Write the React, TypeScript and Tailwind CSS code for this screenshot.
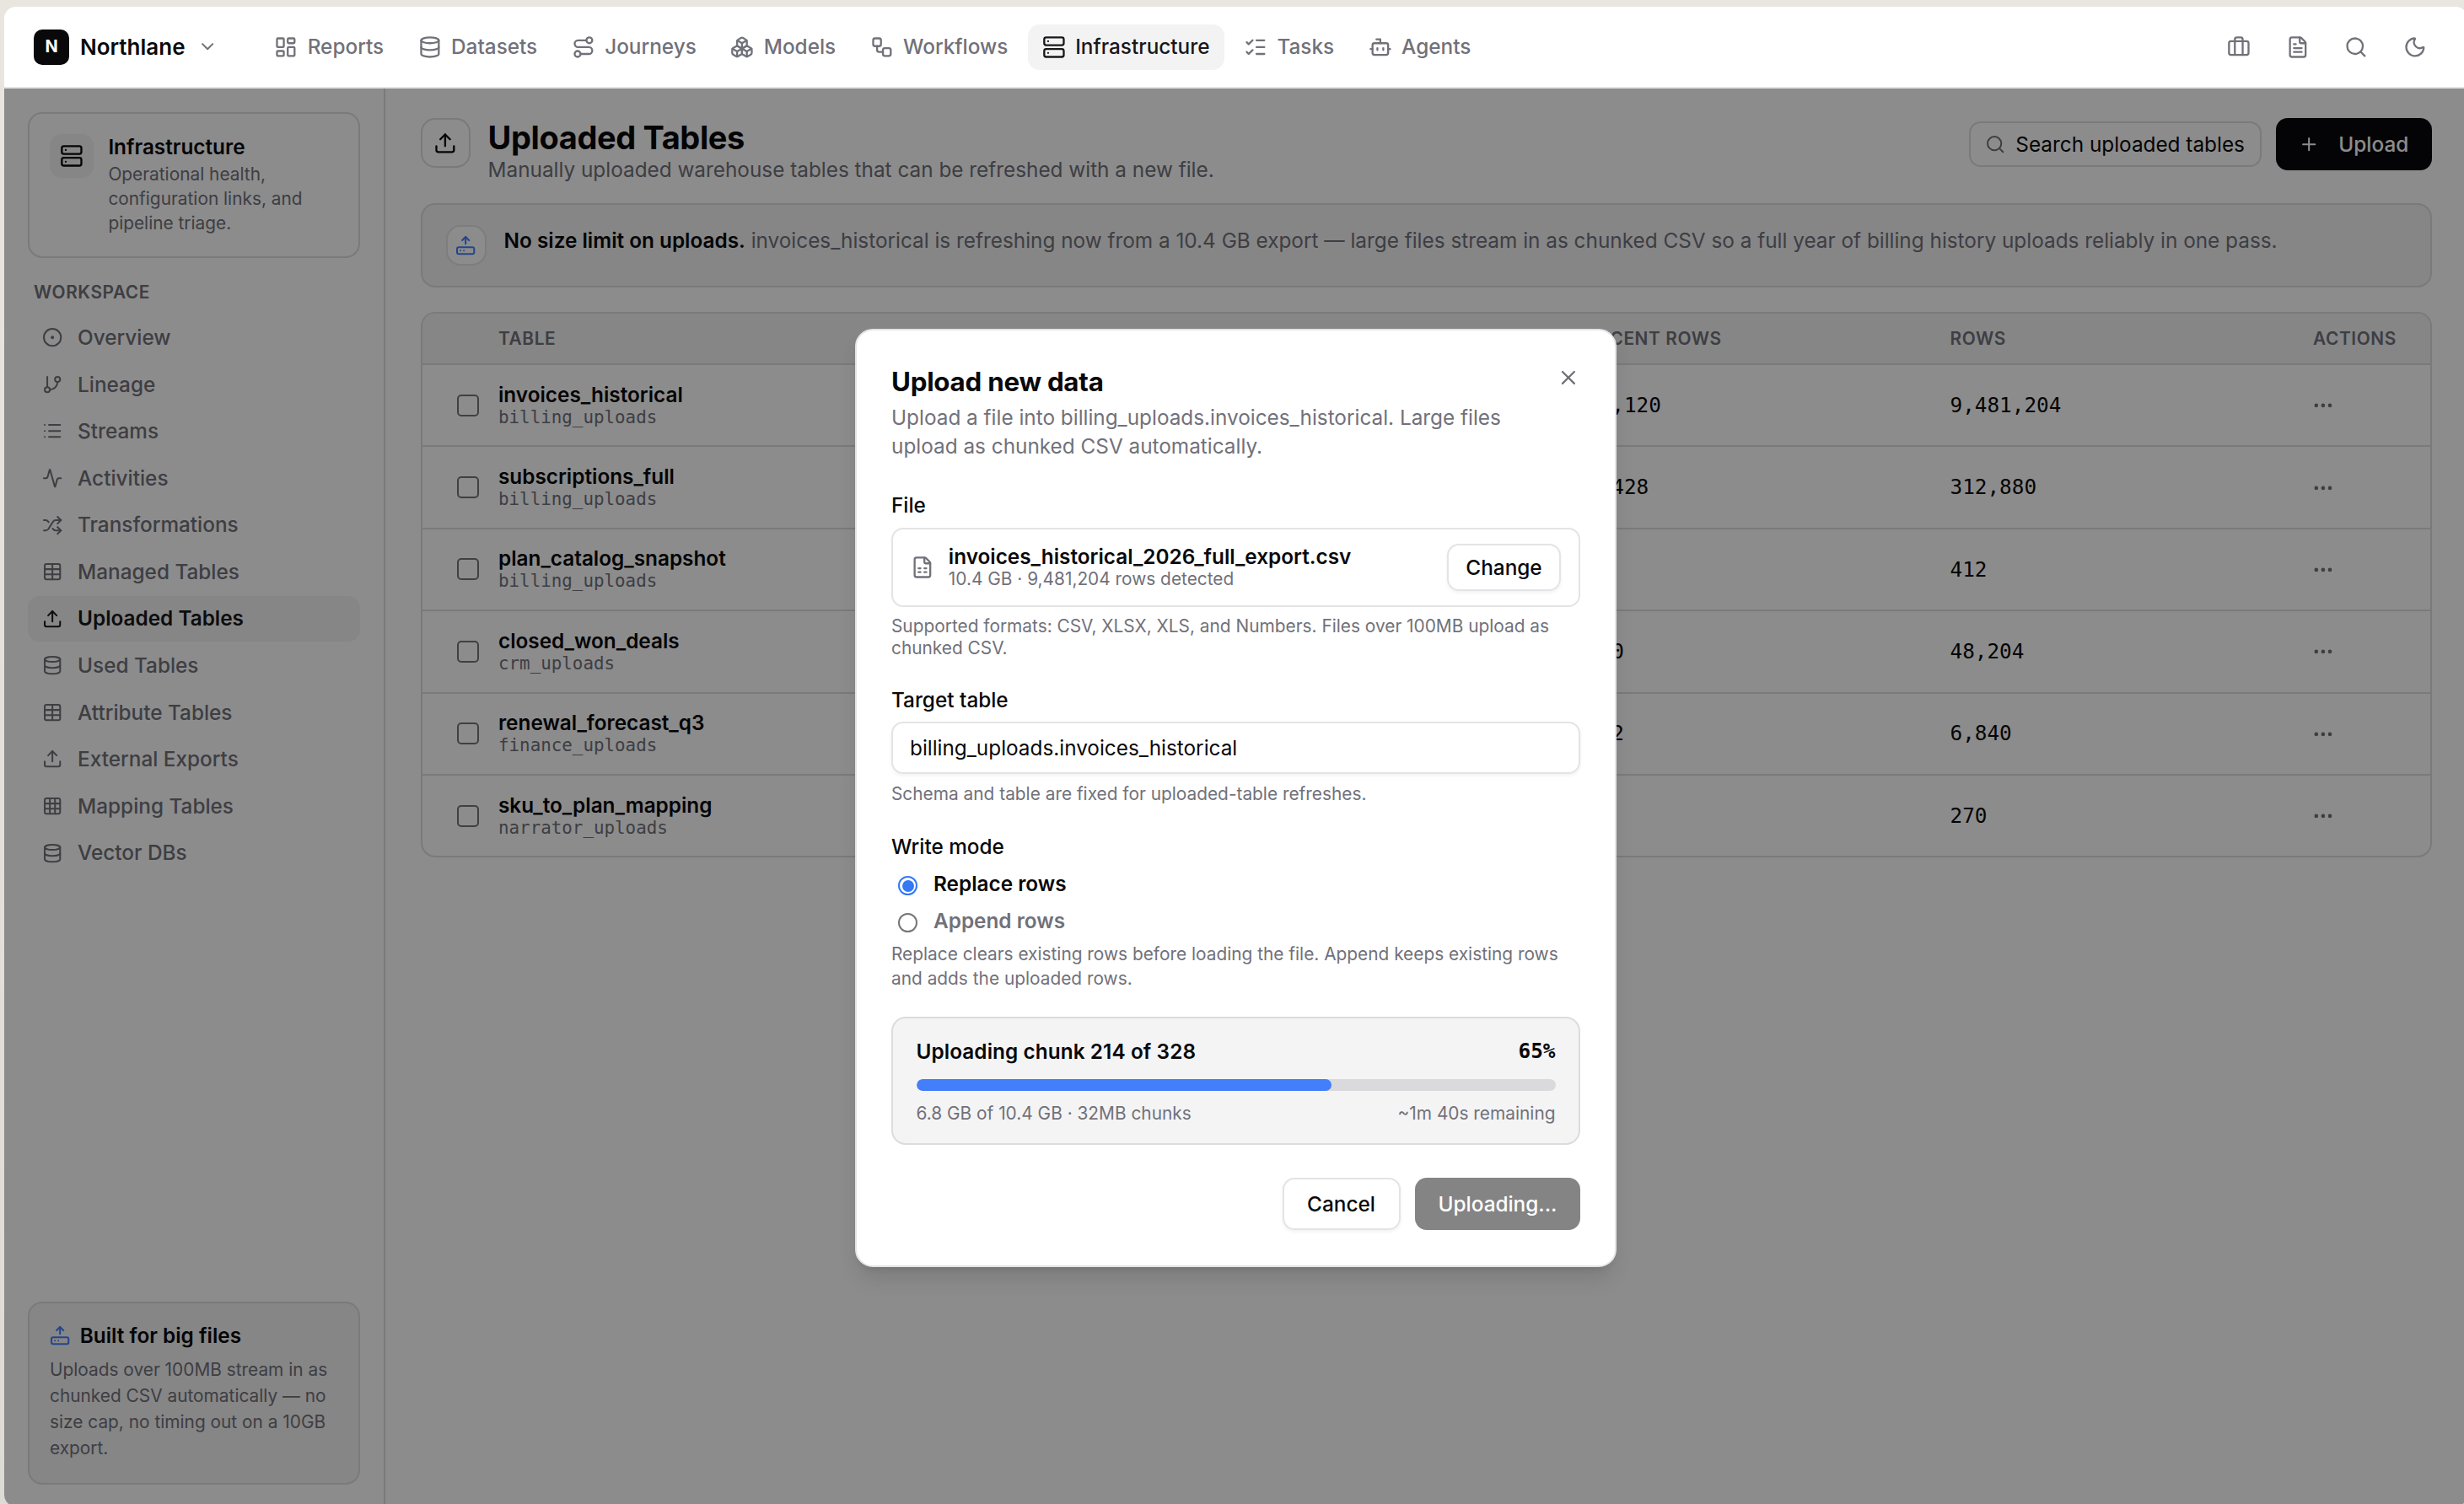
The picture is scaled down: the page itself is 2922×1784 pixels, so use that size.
import type { ReactNode } from "react";
import {
  Activity, Bot, Boxes, Briefcase, ChevronDown, CircleDot, Database, Ellipsis, FileSpreadsheet, FileText,
  GitBranch, Grid3x3, HardDriveUpload, LayoutDashboard, List, ListChecks, Moon, Plus, Route, Search, Server,
  Shuffle, Table, Upload, Workflow, X, type LucideIcon,
} from "lucide-react";

const MONO = "font-['DejaVu_Sans_Mono',monospace]";

const tabs: { icon: LucideIcon; label: string; active?: boolean }[] = [
  { icon: LayoutDashboard, label: "Reports" },
  { icon: Database, label: "Datasets" },
  { icon: Route, label: "Journeys" },
  { icon: Boxes, label: "Models" },
  { icon: Workflow, label: "Workflows" },
  { icon: Server, label: "Infrastructure", active: true },
  { icon: ListChecks, label: "Tasks" },
  { icon: Bot, label: "Agents" },
];

const tools: LucideIcon[] = [Briefcase, FileText, Search, Moon];

const links: { icon: LucideIcon; label: string; active?: boolean }[] = [
  { icon: CircleDot, label: "Overview" },
  { icon: GitBranch, label: "Lineage" },
  { icon: List, label: "Streams" },
  { icon: Activity, label: "Activities" },
  { icon: Shuffle, label: "Transformations" },
  { icon: Table, label: "Managed Tables" },
  { icon: Upload, label: "Uploaded Tables", active: true },
  { icon: Database, label: "Used Tables" },
  { icon: Table, label: "Attribute Tables" },
  { icon: Upload, label: "External Exports" },
  { icon: Grid3x3, label: "Mapping Tables" },
  { icon: Database, label: "Vector DBs" },
];

const rows = [
  { name: "invoices_historical", schema: "billing_uploads", recent: "84,120", total: "9,481,204" },
  { name: "subscriptions_full", schema: "billing_uploads", recent: "2,428", total: "312,880" },
  { name: "plan_catalog_snapshot", schema: "billing_uploads", recent: "12", total: "412" },
  { name: "closed_won_deals", schema: "crm_uploads", recent: "310", total: "48,204" },
  { name: "renewal_forecast_q3", schema: "finance_uploads", recent: "112", total: "6,840" },
  { name: "sku_to_plan_mapping", schema: "narrator_uploads", recent: "0", total: "270" },
];

function TopBar() {
  return (
    <header className="flex h-[97px] shrink-0 items-center border-b-2 border-[#e4e4e7] pl-[35px] pr-[31px]">
      <div className="flex w-[268px] items-center">
        <div className="flex size-[42px] items-center justify-center rounded-[10px] bg-[#09090b] text-[20px] font-bold text-white">N</div>
        <span className="ml-[13px] text-[26px] font-semibold">Northlane</span>
        <ChevronDown className="ml-[14px] size-3.5 text-[#71717a]" />
      </div>
      <nav className="flex gap-[5.9px]">
        {tabs.map(({ icon: Icon, label, active }) => (
          <div
            key={label}
            className={`flex h-[54px] items-center gap-[11.5px] rounded-lg px-2.5 font-medium ${active ? "bg-[#f3f3f4] text-[#18181b]" : "text-[#71717a]"}`}
          >
            <Icon className="size-4" />
            {label}
          </div>
        ))}
      </nav>
      <div className="ml-auto flex gap-1 text-[#71717a]">
        {tools.map((Icon, i) => (
          <div key={i} className="flex size-9 items-center justify-center">
            <Icon className="size-4" />
          </div>
        ))}
      </div>
    </header>
  );
}

function Sidebar() {
  return (
    <aside className="flex w-[452px] shrink-0 flex-col border-r-2 border-[#dedee0] px-[28px] pt-[28px] pb-[26px]">
      <div className="flex h-[173px] gap-2.5 rounded-xl border-2 border-[#dedee0] px-[24px] pt-[24px]">
        <div className="flex size-[52px] shrink-0 items-center justify-center rounded-[14px] bg-[#f4f4f5]">
          <Server className="size-4" />
        </div>
        <div>
          <div className="-mt-px leading-[33px] font-semibold">Infrastructure</div>
          <p className="mt-px text-xs leading-[29px] whitespace-nowrap text-[#71717a]">
            Operational health,
            <br />
            configuration links, and
            <br />
            pipeline triage.
          </p>
        </div>
      </div>
      <div className="mt-[27px] ml-[7px] text-xs leading-[28px] font-semibold tracking-[0.6px] text-[#71717a]">WORKSPACE</div>
      <nav className="mt-[12.5px] flex flex-col gap-[2px]">
        {links.map(({ icon: Icon, label, active }) => (
          <div
            key={label}
            className={`flex h-[53.6px] items-center gap-2.5 rounded-lg px-2.5 ${active ? "bg-[#f4f4f5] font-semibold text-[#18181b]" : "font-medium text-[#71717a]"}`}
          >
            <Icon className="size-3.5" />
            {label}
          </div>
        ))}
      </nav>
      <div className="mt-auto h-[217px] rounded-xl border-2 border-[#dedee0] bg-[#f4f4f5] px-[24px] pt-[21.5px]">
        <div className="flex items-center gap-[11.5px] leading-[33px] font-semibold">
          <HardDriveUpload className="size-3.5 text-[#437efb]" />
          Built for big files
        </div>
        <p className="mt-[8px] text-xs leading-[31.3px] whitespace-nowrap text-[#71717a]">
          Uploads over 100MB stream in as
          <br />
          chunked CSV automatically — no
          <br />
          size cap, no timing out on a 10GB
          <br />
          export.
        </p>
      </div>
    </aside>
  );
}

const columns = "grid grid-cols-[90.5px_1291px_430.5px_430.5px_1fr]";

function TableList() {
  return (
    <div className="mt-[28.5px] overflow-hidden rounded-xl border-2 border-[#dedee0]">
      <div className={`${columns} h-[61.5px] items-center border-b-2 border-[#dedee0] bg-[#f4f4f5] pt-px text-xs font-semibold tracking-[0.6px] text-[#71717a]`}>
        <span />
        <span>TABLE</span>
        <span>RECENT ROWS</span>
        <span>ROWS</span>
        <span>ACTIONS</span>
      </div>
      {rows.map((r) => (
        <div key={r.name} className={`${columns} h-[97.4px] items-center border-b-2 border-[#dedee0] last:h-[95.5px] last:border-b-0`}>
          <span className="ml-[41px] size-[26px] rounded-[5px] border-2 border-[#767676]" />
          <div>
            <div className="leading-[28px] font-semibold">{r.name}</div>
            <div className={`${MONO} text-xs leading-[26px] text-[#71717a]`}>{r.schema}</div>
          </div>
          <span className={`${MONO} pt-px`}>{r.recent}</span>
          <span className={`${MONO} pt-px`}>{r.total}</span>
          <Ellipsis className="mt-px -ml-[2px] size-4 text-[#71717a]" />
        </div>
      ))}
    </div>
  );
}

function Main() {
  return (
    <main className="min-w-0 flex-1 pt-[35px] pr-[42px] pl-[41.5px]">
      <div className="flex items-start">
        <div className="flex size-[59px] items-center justify-center rounded-xl border-2 border-[#dedee0]">
          <Upload className="size-4" />
        </div>
        <div className="ml-[21px]">
          <h1 className="text-[38px] leading-[46px] font-bold tracking-[-0.38px]">Uploaded Tables</h1>
          <p className="-mt-px leading-[33px] text-[#71717a]">Manually uploaded warehouse tables that can be refreshed with a new file.</p>
        </div>
        <div className="ml-auto flex items-center gap-[17px]">
          <div className="flex h-[54px] w-[347px] items-center gap-[12px] rounded-lg border-2 border-[#dedee0] pl-[17px]">
            <Search className="size-3.5 text-[#71717a]" />
            Search uploaded tables
          </div>
          <div className="flex h-[62px] w-[185px] items-center gap-[23px] rounded-lg bg-[#09090b] pl-[27px] font-medium text-white">
            <Plus className="size-3.5" />
            Upload
          </div>
        </div>
      </div>
      <div className="mt-[23px] flex h-[100px] rounded-xl border-2 border-[#dedee0] bg-[#f4f4f5] px-[28px] pt-[24px]">
        <div className="flex size-[48px] items-center justify-center rounded-xl border-2 border-[#e4e4e7] bg-white">
          <HardDriveUpload className="size-3.5 text-[#437efb]" />
        </div>
        <p className="ml-[21px] leading-[37px] text-[#71717a]">
          <span className="font-semibold text-[#09090b]">No size limit on uploads.</span> invoices_historical is refreshing now from a 10.4 GB
          export — large files stream in as chunked CSV so a full year of billing history uploads reliably in one pass.
        </p>
      </div>
      <TableList />
    </main>
  );
}

function Hint({ children, className }: { children: ReactNode; className: string }) {
  return <p className={`text-xs whitespace-nowrap text-[#71717a] ${className}`}>{children}</p>;
}

function Radio({ checked }: { checked?: boolean }) {
  return (
    <span className={`mt-[6px] flex size-[23px] items-center justify-center rounded-full border-2 ${checked ? "border-[#3478f6]" : "border-[#767676]"}`}>
      {checked && <span className="size-[14px] shrink-0 rounded-full bg-[#3478f6]" />}
    </span>
  );
}

function UploadDialog() {
  return (
    <div className="absolute top-[390px] left-[1014px] h-[1113px] w-[903px] rounded-[21px] border-2 border-[#e4e4e7] bg-white px-[41px] pt-[41px] shadow-[0_17px_26px_-5px_rgba(0,0,0,0.12),0_7px_10px_-7px_rgba(0,0,0,0.12)]">
      <div className="flex justify-between">
        <h2 className="text-[31.3px] leading-[40px] font-bold tracking-[-0.25px]">Upload new data</h2>
        <X className="mt-px size-4 text-[#71717a]" />
      </div>
      <p className="mt-[5px] leading-[34px] text-[#71717a]">
        Upload a file into billing_uploads.invoices_historical. Large files
        <br />
        upload as chunked CSV automatically.
      </p>
      <div className="mt-[38px] leading-[30px] font-medium">File</div>
      <div className="mt-[12px] flex h-[94px] items-center rounded-lg border-2 border-[#e4e4e7] px-[21px]">
        <FileSpreadsheet className="size-4 text-[#71717a]" />
        <div className="ml-[17px]">
          <div className="leading-[28px] font-semibold">invoices_historical_2026_full_export.csv</div>
          <div className="text-xs leading-[26px] text-[#71717a]">10.4 GB · 9,481,204 rows detected</div>
        </div>
        <div className="ml-auto flex h-[56px] w-[135px] items-center justify-center rounded-lg border-2 border-[#e4e4e7] font-medium shadow-[0_2px_4px_rgba(0,0,0,0.06)]">
          Change
        </div>
      </div>
      <Hint className="mt-[10px] leading-[25.5px]">
        Supported formats: CSV, XLSX, XLS, and Numbers. Files over 100MB upload as
        <br />
        chunked CSV.
      </Hint>
      <div className="mt-[34px] leading-[30px] font-medium">Target table</div>
      <div className="mt-[11px] flex h-[62px] items-center rounded-lg border-2 border-[#e4e4e7] px-[20px] shadow-[0_2px_4px_rgba(0,0,0,0.06)]">
        billing_uploads.invoices_historical
      </div>
      <Hint className="mt-[11px] leading-[26px]">Schema and table are fixed for uploaded-table refreshes.</Hint>
      <div className="mt-[34px] leading-[30px] font-medium">Write mode</div>
      <div className="mt-[14px] flex h-[44px] pl-[8px] font-semibold">
        <Radio checked />
        <span className="ml-[19px] leading-[30px]">Replace rows</span>
      </div>
      <div className="flex h-[39.5px] pl-[8px] font-semibold text-[#71717a]">
        <Radio />
        <span className="ml-[19px] leading-[30px]">Append rows</span>
      </div>
      <Hint className="leading-[29px]">
        Replace clears existing rows before loading the file. Append keeps existing rows
        <br />
        and adds the uploaded rows.
      </Hint>
      <div className="mt-[31px] h-[152px] rounded-[17px] border-2 border-[#dcdcde] bg-[#f4f4f5] px-[27.5px] pt-[24px]">
        <div className="flex justify-between leading-[30px] font-semibold">
          <span className="tracking-[0.08px]">Uploading chunk 214 of 328</span>
          <span className={MONO}>65%</span>
        </div>
        <div className="mt-[18px] h-[14px] overflow-hidden rounded-full bg-[#dadadc]">
          <div className="h-full w-[65%] rounded-full bg-[#437efb]" />
        </div>
        <div className="mt-[14px] flex justify-between text-xs leading-[26px] text-[#71717a]">
          <span>6.8 GB of 10.4 GB · 32MB chunks</span>
          <span>~1m 40s remaining</span>
        </div>
      </div>
      <div className="mt-[39.5px] flex justify-end gap-[17.5px] font-medium">
        <div className="flex h-[62px] w-[140px] items-center justify-center rounded-lg border-2 border-[#e4e4e7] shadow-[0_2px_4px_rgba(0,0,0,0.06)]">
          Cancel
        </div>
        <div className="flex h-[62px] w-[196px] items-center justify-center rounded-lg bg-[#848485] text-white">Uploading...</div>
      </div>
    </div>
  );
}

export default function App() {
  return (
    <div className="relative h-[1784px] w-[2922px] overflow-hidden bg-linear-to-b from-[#e9e6e0] to-[#dddbd4] pt-[8px] pl-[5px] font-[Inter,sans-serif] text-sm text-[#09090b] [--radius-lg:14px] [--radius-xl:17px] [--spacing:6.95px] [--text-sm:24.33px] [--text-xs:20.85px]">
      <div className="flex h-[1779px] w-[2921px] flex-col overflow-hidden rounded-[14px] bg-white">
        <TopBar />
        <div className="relative flex min-h-0 flex-1">
          <Sidebar />
          <Main />
          <div className="absolute inset-0 bg-black/45" />
        </div>
      </div>
      <UploadDialog />
    </div>
  );
}
